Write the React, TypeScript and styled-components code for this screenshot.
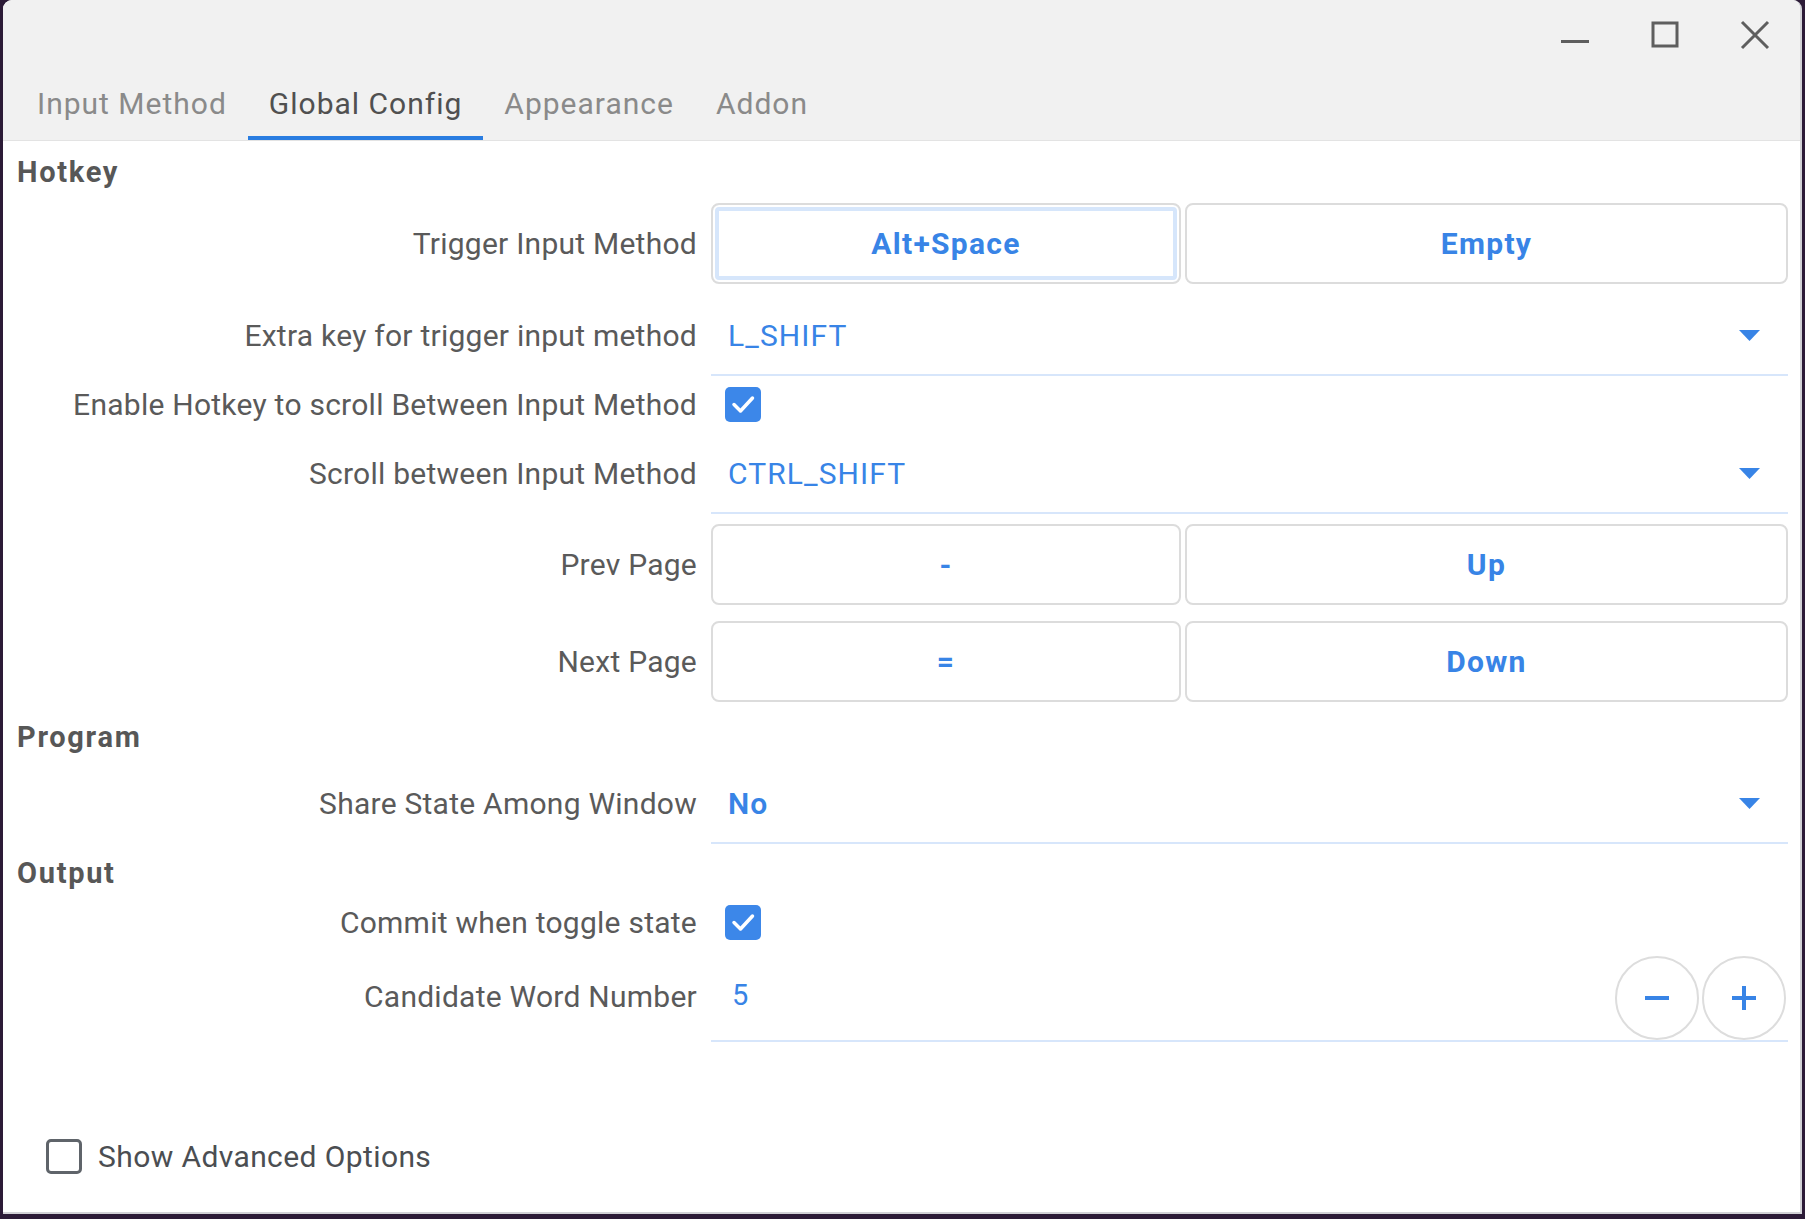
import React from "react";
import styled, { createGlobalStyle, css } from "styled-components";

const GlobalStyle = createGlobalStyle`
  html, body { margin: 0; padding: 0; height: 100%; }
  body {
    background: #2c1b37;
    font-family: Roboto, "Noto Sans", "Liberation Sans", sans-serif;
    overflow: hidden;
  }
  #root { height: 100%; }
`;

const BLUE = "#3884e6";

const Window = styled.div`
  box-sizing: border-box;
  margin: 0 3px 0 3px;
  height: calc(100vh - 5px);
  background: #ffffff;
  border-right: 2px solid #d2d2d6;
  border-bottom: 2px solid #d2d2d6;
  border-radius: 9px 9px 0 0;
  overflow: hidden;
  display: flex;
  flex-direction: column;
`;

const Header = styled.div`
  background: #f1f1f1;
  border-bottom: 1px solid #e3e3e3;
  display: flex;
  flex-direction: column;
`;

const TitleBar = styled.div`
  height: 70px;
  display: flex;
  justify-content: flex-end;
  align-items: center;
  padding-right: 26px;
  gap: 52px;
`;

const WinButton = styled.div`
  width: 38px;
  height: 38px;
  display: flex;
  align-items: center;
  justify-content: center;
  color: #5e5e5e;
`;

const TabBar = styled.div`
  height: 70px;
  display: flex;
  align-items: stretch;
  padding-left: 13px;
`;

const Tab = styled.div<{ $active?: boolean }>`
  box-sizing: border-box;
  padding: 0 21px;
  display: flex;
  align-items: center;
  font-size: 30px;
  letter-spacing: 1px;
  color: ${(p) => (p.$active ? "#505050" : "#8a8a8a")};
  border-bottom: 4px solid ${(p) => (p.$active ? "#2a7de1" : "transparent")};
`;

const Content = styled.div`
  flex: 1;
  display: flex;
  flex-direction: column;
  gap: 4px;
  padding: 6px 12px 0 0;
`;

const SectionTitle = styled.div`
  height: 46px;
  display: flex;
  align-items: center;
  padding: 3px 0 0 14px;
  box-sizing: border-box;
  font-size: 29px;
  font-weight: 700;
  letter-spacing: 1.7px;
  color: #575757;
`;

const Row = styled.div<{ $height?: number; $pad?: number }>`
  display: grid;
  grid-template-columns: 694px 1fr;
  column-gap: 14px;
  align-items: center;
  ${(p) => (p.$height ? css`height: ${p.$height}px;` : "")}
  ${(p) => (p.$pad ? css`padding: ${p.$pad}px 0;` : "")}
`;

const Label = styled.div`
  text-align: right;
  font-size: 30px;
  letter-spacing: 0.25px;
  color: #5a5a5a;
  white-space: nowrap;
`;

const ButtonPair = styled.div`
  display: grid;
  grid-template-columns: 470fr 603fr;
  column-gap: 4px;
`;

const KeyButton = styled.div<{ $focused?: boolean }>`
  box-sizing: border-box;
  height: 81px;
  border: 2px solid #dcdcdc;
  border-radius: 8px;
  background: #fff;
  display: flex;
  align-items: center;
  justify-content: center;
  font-size: 30px;
  font-weight: 700;
  letter-spacing: 1.3px;
  color: ${BLUE};
  ${(p) =>
    p.$focused &&
    css`
      box-shadow: inset 0 0 0 2px #ffffff, inset 0 0 0 6px #d6e6fb;
    `}
`;

const Combo = styled.div`
  box-sizing: border-box;
  height: 82px;
  display: flex;
  align-items: center;
  justify-content: space-between;
  padding: 2px 28px 0 17px;
  border-bottom: 2px solid #d7e6fb;
  font-size: 30px;
  letter-spacing: 1.1px;
  color: ${BLUE};
`;

const ComboValue = styled.span<{ $bold?: boolean }>`
  font-weight: ${(p) => (p.$bold ? 600 : 400)};
`;

const CheckBox = styled.div<{ $checked?: boolean }>`
  box-sizing: border-box;
  width: 36px;
  height: 35px;
  border-radius: 5px;
  display: flex;
  align-items: center;
  justify-content: center;
  ${(p) =>
    p.$checked
      ? css`
          background: #3c87e9;
        `
      : css`
          border: 3px solid #5f646a;
          background: #fff;
        `}
`;

const CheckCell = styled.div`
  padding-left: 14px;
  display: flex;
  align-items: center;
`;

const Spin = styled.div`
  box-sizing: border-box;
  height: 92px;
  display: flex;
  align-items: flex-end;
  justify-content: space-between;
  border-bottom: 2px solid #d7e6fb;
  padding-right: 2px;
`;

const SpinValue = styled.span`
  align-self: center;
  padding-left: 21px;
  font-size: 29px;
  color: ${BLUE};
`;

const SpinButtons = styled.div`
  display: flex;
  gap: 3px;
`;

const RoundButton = styled.div`
  box-sizing: border-box;
  width: 84px;
  height: 84px;
  border-radius: 50%;
  border: 2px solid #dddddd;
  background: #fff;
  display: flex;
  align-items: center;
  justify-content: center;
`;

const Footer = styled.div`
  margin-top: auto;
  display: flex;
  align-items: center;
  gap: 16px;
  padding: 0 0 38px 43px;
`;

const FooterText = styled.span`
  font-size: 30px;
  letter-spacing: 0.4px;
  color: #4b4e52;
`;

const Arrow = () => (
  <svg width="21" height="11" viewBox="0 0 21 11">
    <polygon points="0,0 21,0 10.5,11" fill={BLUE} />
  </svg>
);

const Check = () => (
  <svg width="26" height="22" viewBox="0 0 26 22">
    <path d="M4 11.5 L10.5 18 L22.5 5" fill="none" stroke="#fff" strokeWidth="3.5" strokeLinecap="round" strokeLinejoin="round" />
  </svg>
);

const Minus = () => (
  <svg width="24" height="24" viewBox="0 0 24 24">
    <rect x="0" y="10" width="24" height="4" fill={BLUE} />
  </svg>
);

const Plus = () => (
  <svg width="24" height="24" viewBox="0 0 24 24">
    <rect x="0" y="10" width="24" height="4" fill={BLUE} />
    <rect x="10" y="0" width="4" height="24" fill={BLUE} />
  </svg>
);

const ComboRow = ({ label, value, bold }: { label: string; value: string; bold?: boolean }) => (
  <Row>
    <Label>{label}</Label>
    <Combo>
      <ComboValue $bold={bold}>{value}</ComboValue>
      <Arrow />
    </Combo>
  </Row>
);

const KeyRow = ({ label, a, b, focused }: { label: string; a: string; b: string; focused?: boolean }) => (
  <Row $pad={6}>
    <Label>{label}</Label>
    <ButtonPair>
      <KeyButton $focused={focused}>{a}</KeyButton>
      <KeyButton>{b}</KeyButton>
    </ButtonPair>
  </Row>
);

const CheckRow = ({ label }: { label: string }) => (
  <Row $height={48}>
    <Label>{label}</Label>
    <CheckCell>
      <CheckBox $checked>
        <Check />
      </CheckBox>
    </CheckCell>
  </Row>
);

export default function App() {
  return (
    <>
      <GlobalStyle />
      <Window>
        <Header>
          <TitleBar>
            <WinButton>
              <svg width="30" height="30" viewBox="0 0 30 30">
                <rect x="1" y="20" width="28" height="3" fill="currentColor" />
              </svg>
            </WinButton>
            <WinButton>
              <svg width="28" height="28" viewBox="0 0 28 28">
                <rect x="2" y="2" width="24" height="23" fill="none" stroke="currentColor" strokeWidth="3" />
              </svg>
            </WinButton>
            <WinButton>
              <svg width="30" height="30" viewBox="0 0 30 30">
                <path d="M2 2 L28 28 M28 2 L2 28" stroke="currentColor" strokeWidth="3" />
              </svg>
            </WinButton>
          </TitleBar>
          <TabBar>
            <Tab>Input Method</Tab>
            <Tab $active>Global Config</Tab>
            <Tab>Appearance</Tab>
            <Tab>Addon</Tab>
          </TabBar>
        </Header>
        <Content>
          <SectionTitle>Hotkey</SectionTitle>
          <KeyRow label="Trigger Input Method" a="Alt+Space" b="Empty" focused />
          <ComboRow label="Extra key for trigger input method" value="L_SHIFT" />
          <CheckRow label="Enable Hotkey to scroll Between Input Method" />
          <ComboRow label="Scroll between Input Method" value="CTRL_SHIFT" />
          <KeyRow label="Prev Page" a="-" b="Up" />
          <KeyRow label="Next Page" a="=" b="Down" />
          <SectionTitle>Program</SectionTitle>
          <ComboRow label="Share State Among Window" value="No" bold />
          <SectionTitle>Output</SectionTitle>
          <CheckRow label="Commit when toggle state" />
          <Row>
            <Label>Candidate Word Number</Label>
            <Spin>
              <SpinValue>5</SpinValue>
              <SpinButtons>
                <RoundButton>
                  <Minus />
                </RoundButton>
                <RoundButton>
                  <Plus />
                </RoundButton>
              </SpinButtons>
            </Spin>
          </Row>
          <Footer>
            <CheckBox />
            <FooterText>Show Advanced Options</FooterText>
          </Footer>
        </Content>
      </Window>
    </>
  );
}
